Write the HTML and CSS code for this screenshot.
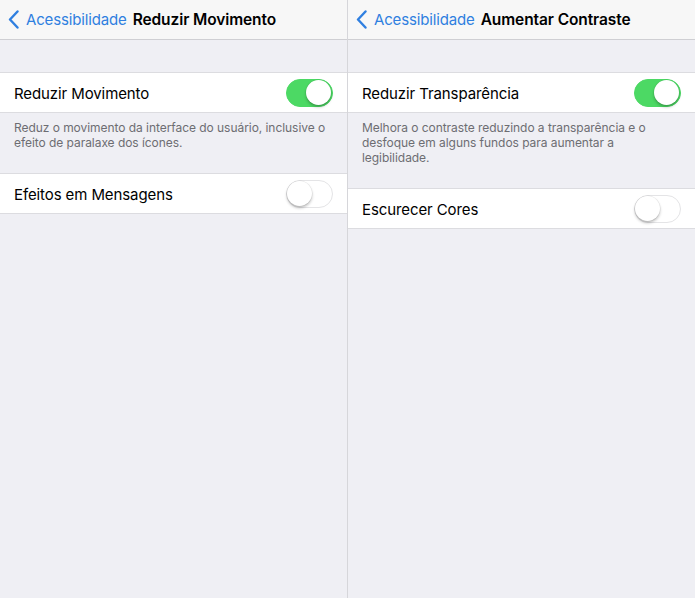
FILE: index.html
```html
<!DOCTYPE html>
<html lang="pt">
<head>
<meta charset="utf-8">
<link rel="stylesheet" href="styles.css">
</head>
<body>
<div class="screen">
  <section class="panel">
    <header class="nav">
      <span class="back">
        <svg class="chev" width="11" height="19" viewBox="0 0 11 19"><path d="M9.5 1.5 L2 9.5 L9.5 17.5" fill="none" stroke="#2f7fe0" stroke-width="2.4" stroke-linecap="round" stroke-linejoin="round"/></svg>
        <span class="back-label">Acessibilidade</span>
      </span>
      <span class="title">Reduzir Movimento</span>
    </header>
    <div class="spacer"></div>
    <div class="row">
      <span class="label">Reduzir Movimento</span>
      <span class="toggle on"><span class="knob"></span></span>
    </div>
    <p class="footer">Reduz o movimento da interface do usuário, inclusive o efeito de paralaxe dos ícones.</p>
    <div class="row">
      <span class="label">Efeitos em Mensagens</span>
      <span class="toggle"><span class="knob"></span></span>
    </div>
  </section>
  <section class="panel right">
    <header class="nav">
      <span class="back">
        <svg class="chev" width="11" height="19" viewBox="0 0 11 19"><path d="M9.5 1.5 L2 9.5 L9.5 17.5" fill="none" stroke="#2f7fe0" stroke-width="2.4" stroke-linecap="round" stroke-linejoin="round"/></svg>
        <span class="back-label">Acessibilidade</span>
      </span>
      <span class="title">Aumentar Contraste</span>
    </header>
    <div class="spacer"></div>
    <div class="row">
      <span class="label">Reduzir Transparência</span>
      <span class="toggle on"><span class="knob"></span></span>
    </div>
    <p class="footer">Melhora o contraste reduzindo a transparência e o desfoque em alguns fundos para aumentar a legibilidade.</p>
    <div class="row">
      <span class="label">Escurecer Cores</span>
      <span class="toggle"><span class="knob"></span></span>
    </div>
  </section>
</div>
</body>
</html>
```
FILE: styles.css
```css
html, body {
  margin: 0;
  padding: 0;
}
body {
  background: #efeff4;
  font-family: Inter, Roboto, "Liberation Sans", sans-serif;
  color: #000;
}
.screen {
  display: flex;
  width: 695px;
  height: 598px;
  overflow: hidden;
}
.panel {
  width: 347px;
  flex: none;
  display: flex;
  flex-direction: column;
}
.panel.right {
  width: 347px;
  border-left: 1px solid #d6d6da;
}
.nav {
  height: 40px;
  box-sizing: border-box;
  background: #f7f7f7;
  border-bottom: 1px solid #cfcfd3;
  display: flex;
  align-items: center;
  padding-left: 8px;
  gap: 6px;
}
.back {
  display: flex;
  align-items: center;
  gap: 7px;
}
.chev {
  display: block;
}
.back-label {
  color: #2f7fe0;
  font-size: 15px;
  letter-spacing: -0.15px;
}
.title {
  font-weight: 600;
  font-size: 15.5px;
  letter-spacing: -0.1px;
}
.spacer {
  height: 32px;
}
.row {
  height: 41px;
  box-sizing: border-box;
  background: #fff;
  border-top: 1px solid #dcdce0;
  border-bottom: 1px solid #dcdce0;
  display: flex;
  align-items: center;
  justify-content: space-between;
  padding: 1px 14px 0;
}
.label {
  font-size: 15px;
  letter-spacing: -0.1px;
}
.toggle {
  width: 47px;
  height: 28px;
  box-sizing: border-box;
  border-radius: 14px;
  border: 1.5px solid #e4e4e6;
  background: #fff;
  position: relative;
  flex: none;
}
.toggle.on {
  background: #4cd964;
  border-color: #4cd964;
}
.knob {
  position: absolute;
  top: 0;
  left: 0;
  width: 25px;
  height: 25px;
  border-radius: 50%;
  background: #fff;
  box-shadow: 0 2px 3px rgba(0,0,0,0.25), 0 0 0 0.5px rgba(0,0,0,0.08);
}
.toggle.on .knob {
  left: 19px;
}
.footer {
  margin: 0;
  padding: 7px 14px 23px;
  font-size: 12px;
  line-height: 15px;
  letter-spacing: -0.05px;
  color: #6d6d72;
}
```
